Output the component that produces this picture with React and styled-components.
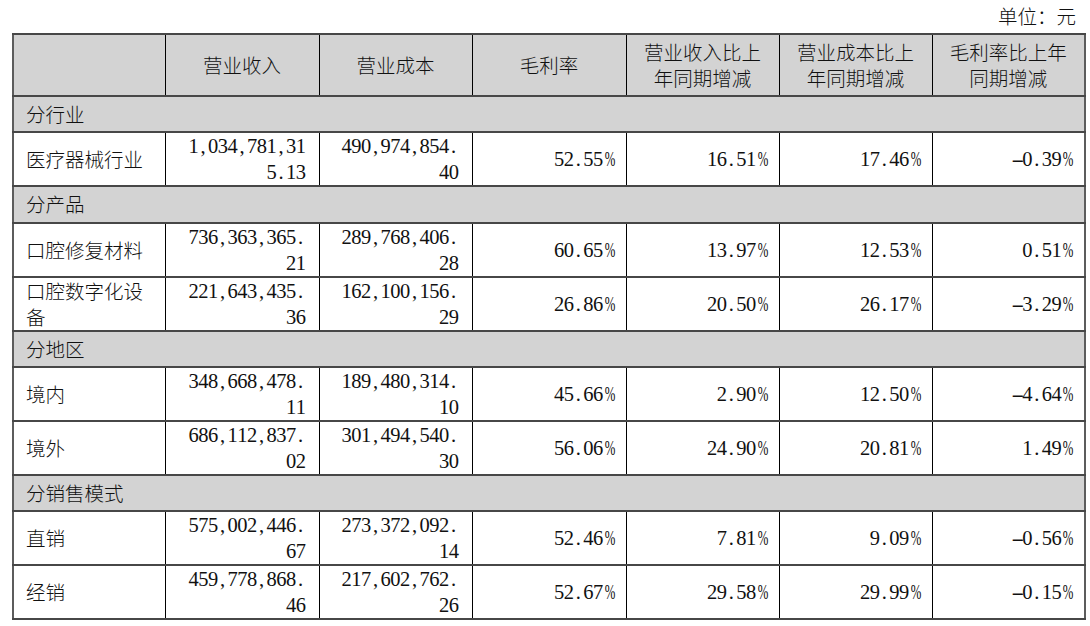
import React from 'react';
import styled, { createGlobalStyle } from "styled-components";

const GlobalStyle = createGlobalStyle`
	body {
		margin: 0;
		background: #fff;
		color: #111;
		font-family: "Liberation Serif", "Noto Sans CJK SC", serif;
	}
`

const rows = [
	{ section: '分行业' },
	{ label: '医疗器械行业', values: ['1,034,781,315.13', '490,974,854.40', '52.55%', '16.51%', '17.46%', '-0.39%'] },
	{ section: '分产品' },
	{ label: '口腔修复材料', values: ['736,363,365.21', '289,768,406.28', '60.65%', '13.97%', '12.53%', '0.51%'] },
	{ label: '口腔数字化设备', values: ['221,643,435.36', '162,100,156.29', '26.86%', '20.50%', '26.17%', '-3.29%'] },
	{ section: '分地区' },
	{ label: '境内', values: ['348,668,478.11', '189,480,314.10', '45.66%', '2.90%', '12.50%', '-4.64%'] },
	{ label: '境外', values: ['686,112,837.02', '301,494,540.30', '56.06%', '24.90%', '20.81%', '1.49%'] },
	{ section: '分销售模式' },
	{ label: '直销', values: ['575,002,446.67', '273,372,092.14', '52.46%', '7.81%', '9.09%', '-0.56%'] },
	{ label: '经销', values: ['459,778,868.46', '217,602,762.26', '52.67%', '29.58%', '29.99%', '-0.15%'] },
]

const headers = ['营业收入', '营业成本', '毛利率', '营业收入比上年同期增减', '营业成本比上年同期增减', '毛利率比上年同期增减']
const widths = [152, 154, 153, 154, 153, 153, 153]

const squeeze = { '%': 'scaleX(0.62)', '-': 'scaleX(1.9)' }

// half-width cells, like the song typeface of the source
function Mono({ text }) {
	const lines = []
	for (let i = 0; i < text.length; i += 12) lines.push(text.slice(i, i + 12))
	return lines.map((line, i) => (
		<Line key={i}>
			{line.split('').map((c, j) => (
				<Ch key={j} $shape={squeeze[c]}>{c}</Ch>
			))}
		</Line>
	))
}

export default function App() {
	return (
		<Page>
			<GlobalStyle />
			<Unit>单位：元</Unit>
			<Table>
				<colgroup>
					{widths.map((w, i) => <col key={i} style={{ width: w }} />)}
				</colgroup>
				<thead>
					<tr>
						<HeadCell />
						{headers.map(h => <HeadCell key={h}>{h}</HeadCell>)}
					</tr>
				</thead>
				<tbody>
					{rows.map((r, i) => r.section ? (
						<tr key={i}>
							<SectionCell colSpan={7}>{r.section}</SectionCell>
						</tr>
					) : (
						<tr key={i}>
							<LabelCell>{r.label}</LabelCell>
							{r.values.map((v, j) => (
								<NumCell key={j}><Mono text={v} /></NumCell>
							))}
						</tr>
					))}
				</tbody>
			</Table>
		</Page>
	)
}

const Page = styled.div`
	padding: 3px 4px 0 12px;
	width: 1074px;
`

const Unit = styled.div`
	text-align: right;
	font-size: 19.5px;
	line-height: 26px;
	padding-right: 10px;
	margin-bottom: 4px;
	font-family: "Noto Sans CJK SC", sans-serif;
	font-weight: 300;
`

const Table = styled.table`
	width: 1074px;
	table-layout: fixed;
	border-collapse: collapse;
	border: 2px solid #5c5c5c;
	font-size: 19.5px;
	line-height: 26px;
`

const Cell = styled.td`
	border-top: 2px solid #474747;
	border-bottom: 2px solid #474747;
	border-left: 1px solid #000;
	border-right: 1px solid #000;
	padding: 0 12px;
	vertical-align: middle;
`

const HeadCell = styled(Cell).attrs({ as: 'th' })`
	height: 60px;
	background: #d3d3d3;
	font-weight: 300;
	text-align: center;
	font-family: "Noto Sans CJK SC", sans-serif;
	padding: 0 13px;
`

const SectionCell = styled(Cell)`
	height: 34.25px;
	background: #d3d3d3;
	font-family: "Noto Sans CJK SC", sans-serif;
	font-weight: 300;
	text-align: left;
	padding-left: 12px;
	border-left: 2px solid #5c5c5c;
	border-right: 2px solid #5c5c5c;
`

const LabelCell = styled(Cell)`
	height: 52px;
	font-family: "Noto Sans CJK SC", sans-serif;
	font-weight: 300;
	text-align: left;
`

const NumCell = styled(Cell)`
	height: 52px;
	text-align: right;
	padding: 0 13px;
	font-size: 20.5px;
`

const Line = styled.div`
	white-space: nowrap;
	height: 26px;
`

const Ch = styled.span`
	display: inline-block;
	width: 9.75px;
	text-align: center;
	transform: ${p => p.$shape || 'none'};
`
